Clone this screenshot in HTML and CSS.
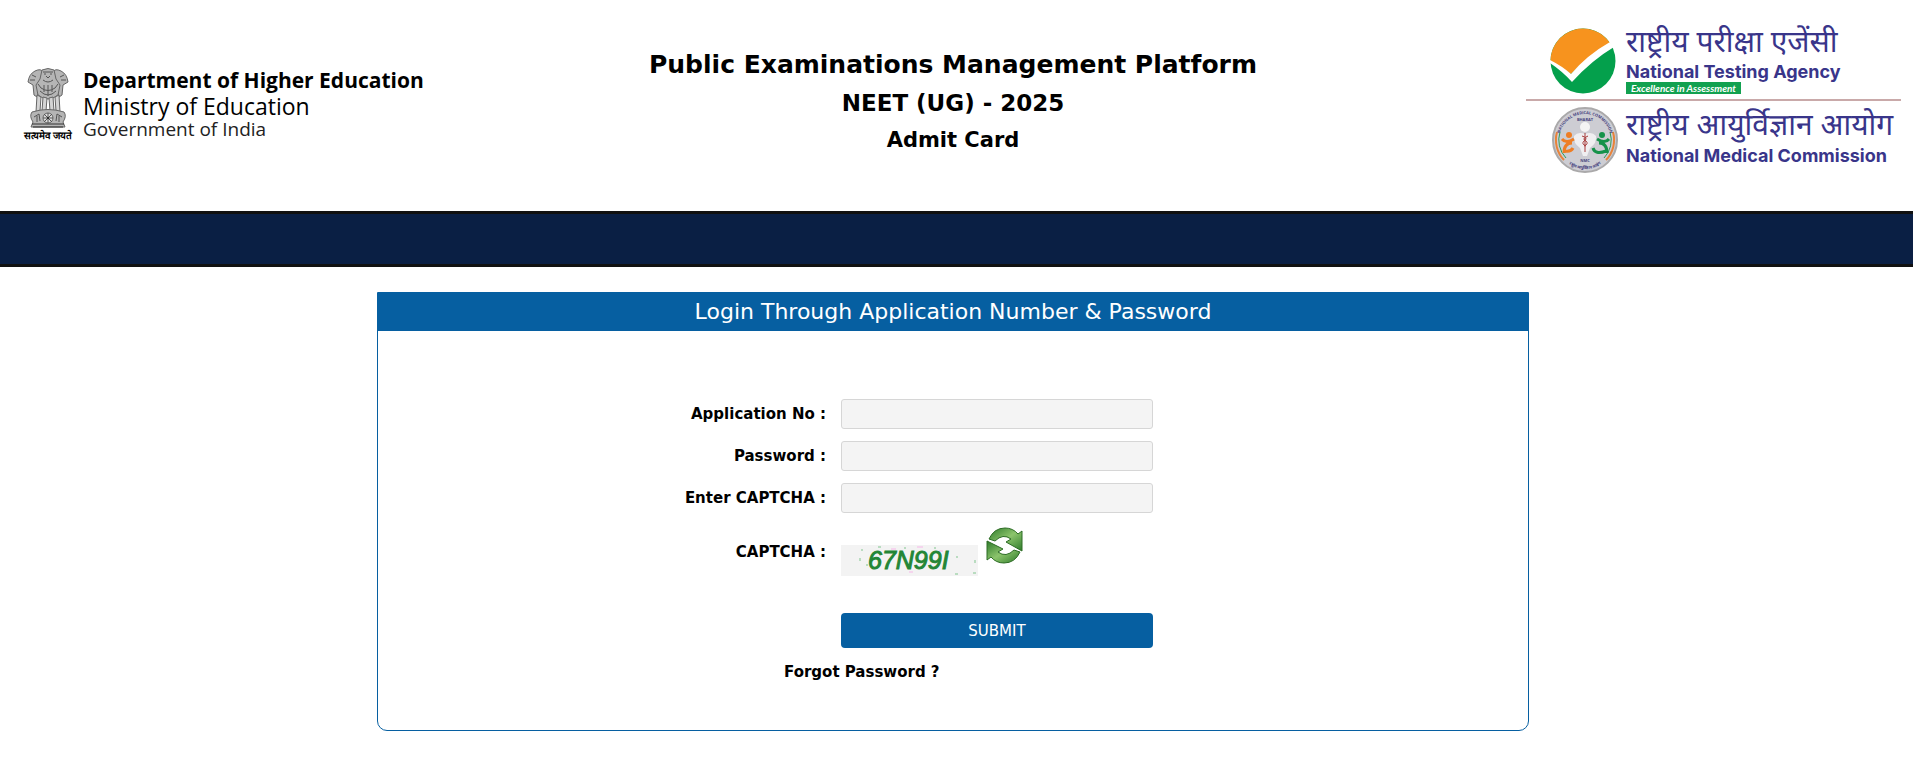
FILE: index.html
```
<!DOCTYPE html>
<html lang="en">
<head>
  <meta charset="UTF-8">
  <meta name="viewport" content="width=device-width, initial-scale=1.0">
  <title>NEET (UG) - 2025 Admit Card</title>
  <link rel="stylesheet" href="styles.css">
</head>
<body>
  <header class="header">
    <div class="dept">
      <div class="emblem">
        <svg width="42" height="60" viewBox="0 0 42 60" aria-hidden="true">
          <g fill="#b5b5b5" stroke="#666" stroke-width="1">
            <path d="M8 3 Q14 0 16 4 L15 12 L10 29 L7 27 L6 17 L1 14 Q2 6 8 3Z"/>
            <path d="M34 3 Q28 0 26 4 L27 12 L32 29 L35 27 L36 17 L41 14 Q40 6 34 3Z"/>
            <path d="M15 2 Q21 -1 27 2 L29 11 L33 17 L31 27 Q26 31 21 31 Q16 31 11 27 L9 17 L13 11Z"/>
            <path d="M10 27 L14 29 L13 43 L9 44Z M16 29 L20 30 L19 43 L15 43Z M22 30 L26 29 L27 43 L23 43Z M28 29 L32 27 L33 44 L29 43Z" fill="#d4d4d4"/>
            <path d="M5 44 Q21 39 37 44 Q40 48 36 54 L38 59 L4 59 L6 54 Q2 48 5 44Z"/>
            <circle cx="21" cy="50" r="5" fill="#ddd"/>
          </g>
          <g fill="none" stroke="#555" stroke-width="1">
            <path d="M16 4 H26 M17 6 H19 M23 6 H25 M19 8 L21 10 L23 8 M16 12 Q21 16 26 12"/>
            <path d="M5 7 L9 9 M3 12 L8 12 M37 7 L33 9 M39 12 L34 12"/>
            <path d="M11 16 L14 20 M17 17 L17 24 M21 17 V28 M25 17 V24 M31 16 L28 20 M13 23 Q21 31 29 23 M14 20 Q21 25 28 20"/>
            <path d="M16 50 H26 M21 45 V55 M17 46 L25 54 M25 46 L17 54"/>
            <path d="M7 49 L12 46 L13 53 M10 48 V54 M35 49 L30 46 L29 53 M32 48 V54"/>
          </g>
          <path d="M5 56 H37 M6 59 H36" stroke="#333" stroke-width="1" fill="none"/>
          <circle cx="21" cy="50" r="1" fill="#222"/>
        </svg>
        <span class="motto" lang="hi">सत्यमेव जयते</span>
      </div>
      <div class="dept-text">
        <div class="dept-name">Department of Higher Education</div>
        <div class="ministry">Ministry of Education</div>
        <div class="government">Government of India</div>
      </div>
    </div>

    <div class="titles">
      <h1>Public Examinations Management Platform</h1>
      <h2>NEET (UG) - 2025</h2>
      <h3>Admit Card</h3>
    </div>

    <div class="agencies">
      <div class="agency nta">
        <svg width="66" height="66" viewBox="0 0 66 66" aria-hidden="true">
          <circle cx="33" cy="33" r="32.5" fill="#04a04c"/>
          <path d="M.5 33 A32.5 32.5 0 0 1 60 15 Q38 28 21 46Z" fill="#f7931e"/>
          <path d="M0 32 Q12 38 21 46 Q37 27 60 14 L64 19 Q42 32 22 54 Q12 43 0 35Z" fill="#fff"/>
        </svg>
        <div>
          <div class="agency-hindi" lang="hi">राष्ट्रीय परीक्षा एजेंसी</div>
          <div class="agency-name">National Testing Agency</div>
          <div class="tagline">Excellence in Assessment</div>
        </div>
      </div>
      <div class="agency nmc">
        <svg width="66" height="68" viewBox="0 0 66 68" aria-hidden="true">
          <defs>
            <path id="ring-top" d="M7 34 A26 26 0 0 1 59 34"/>
            <path id="ring-bottom" d="M4 34 A29 29 0 0 0 62 34"/>
          </defs>
          <circle cx="33" cy="34" r="32" fill="#cdcdd3" stroke="#aaa9aa" stroke-width="2"/>
          <path d="M5 26 A29 29 0 0 0 12 54" fill="none" stroke="#e8833a" stroke-width="2"/>
          <path d="M61 26 A29 29 0 0 1 54 54" fill="none" stroke="#e8833a" stroke-width="2"/>
          <path d="M8 26 A26 26 0 0 0 14 52 M58 26 A26 26 0 0 1 52 52" fill="none" stroke="#2d9b55" stroke-width="1"/>
          <text class="seal-text"><textPath href="#ring-top" startOffset="50%">NATIONAL MEDICAL COMMISSION</textPath></text>
          <text class="seal-text" lang="hi"><textPath href="#ring-bottom" startOffset="50%">राष्ट्रीय आयुर्विज्ञान आयोग</textPath></text>
          <text class="seal-text" x="33" y="15">BHARAT</text>
          <text class="seal-text" x="33" y="56">NMC</text>
          <circle cx="33" cy="21" r="5" fill="#f4f4f4"/>
          <path d="M22 30 Q26 25 33 28 Q40 25 44 30 Q45 37 38 42 L35 50 H31 L28 42 Q21 37 22 30Z" fill="#f0eff1"/>
          <path d="M33 27 V46 M30 30 Q37 32 32 35 Q29 38 34 40 M36 30 Q29 33 34 35 Q37 38 32 40" fill="none" stroke="#a83d3d" stroke-width="1"/>
          <circle cx="17" cy="29" r="3" fill="#ee7d24"/>
          <path d="M10 33 Q14 38 22 33 M20 37 Q12 37 12 47 M13 45 Q19 46 21 42" fill="none" stroke="#ee7d24" stroke-width="3"/>
          <circle cx="50" cy="29" r="3" fill="#16924a"/>
          <path d="M57 33 Q53 38 45 33 M47 37 Q55 37 55 47 M54 45 Q43 49 41 42" fill="none" stroke="#16924a" stroke-width="3"/>
        </svg>
        <div>
          <div class="agency-hindi" lang="hi">राष्ट्रीय आयुर्विज्ञान आयोग</div>
          <div class="agency-name">National Medical Commission</div>
        </div>
      </div>
    </div>
  </header>

  <nav class="navbar"></nav>

  <main class="main">
    <form class="login">
      <h2 class="login-title">Login Through Application Number &amp; Password</h2>
      <div class="fields">
        <label for="appNo">Application No :</label>
        <input type="text" id="appNo">

        <label for="password">Password :</label>
        <input type="password" id="password">

        <label for="captcha">Enter CAPTCHA :</label>
        <input type="text" id="captcha">
      </div>

      <div class="captcha-row">
        <span class="captcha-label">CAPTCHA :</span>
        <div class="captcha-box">
          <svg class="captcha-image" width="137" height="31" viewBox="0 0 137 31" role="img" aria-label="67N99I">
            <rect width="137" height="31" fill="#f3f3f3"/>
            <g fill="#b9dcc0">
              <rect x="20" y="4" width="2" height="2"/><rect x="18" y="13" width="2" height="3"/>
              <rect x="25" y="19" width="2" height="2"/><rect x="37" y="1" width="3" height="2"/>
              <rect x="63" y="2" width="2" height="2"/><rect x="93" y="2" width="2" height="2"/>
              <rect x="115" y="11" width="2" height="2"/><rect x="114" y="28" width="3" height="2"/>
              <rect x="132" y="27" width="3" height="2"/><rect x="133" y="15" width="2" height="3"/>
            </g>
            <g fill="#f5d5ee">
              <rect x="50" y="3" width="5" height="2"/><rect x="76" y="1" width="6" height="2"/>
              <rect x="98" y="5" width="4" height="2"/><rect x="68" y="26" width="4" height="2"/>
            </g>
            <text class="captcha-text" x="27" y="24">67N99I</text>
          </svg>
          <button type="button" class="refresh" aria-label="Refresh CAPTCHA">
            <svg width="37" height="37" viewBox="0 0 37 37" aria-hidden="true">
              <defs>
                <linearGradient id="green" x1="0" y1="0" x2="1" y2="1">
                  <stop offset="0" stop-color="#2d7a2a"/>
                  <stop offset=".5" stop-color="#8cc46c"/>
                  <stop offset="1" stop-color="#2d7a2a"/>
                </linearGradient>
              </defs>
              <g fill="url(#green)" stroke="#2c6c24" stroke-width="1">
                <path d="M3 12 Q8 1 19 1 Q27 1 32 7 L36 4 V24 L20 15 L25 12 Q17 6 9 14Z"/>
                <path d="M34 25 Q29 36 18 36 Q10 36 5 30 L1 33 V14 L17 22 L12 25 Q20 31 28 23Z"/>
              </g>
            </svg>
          </button>
        </div>
      </div>

      <button type="submit" class="submit">SUBMIT</button>
      <a href="#" class="forgot">Forgot Password ?</a>
    </form>
  </main>
</body>
</html>
```
FILE: styles.css
```
* {
  box-sizing: border-box;
}

body {
  margin: 0;
  font-family: Verdana, "DejaVu Sans", sans-serif;
  font-size: 15px;
  color: #000;
  background: #fff;
}

h1,
h2,
h3 {
  margin: 0;
}

svg {
  display: block;
  flex: none;
}

.header {
  display: grid;
  grid-template-columns: 1fr auto 1fr;
  min-height: 211px;
  padding: 28px 12px 0 5px;
}

.dept {
  display: flex;
  align-items: flex-start;
  gap: 12px;
  padding: 40px 0 0 20px;
  font-family: "Open Sans", sans-serif;
}

.emblem {
  display: flex;
  flex-direction: column;
  align-items: center;
  width: 46px;
}

.motto {
  font-size: 10px;
  font-weight: bold;
  line-height: 14px;
  white-space: nowrap;
}

.dept-name {
  font-size: 21px;
  font-weight: bold;
  line-height: 25px;
}

.ministry {
  font-size: 23px;
  line-height: 26px;
}

.government {
  font-size: 19px;
  line-height: 20px;
  color: #222;
}

.titles {
  padding-top: 18px;
  text-align: center;
}

.titles h1 {
  font-size: 25px;
  line-height: 38px;
}

.titles h2 {
  font-size: 23px;
  line-height: 38px;
}

.titles h3 {
  font-size: 21px;
  line-height: 36px;
}

.agencies {
  justify-self: end;
  width: 375px;
  color: #39358a;
}

.agency {
  display: flex;
  gap: 10px;
  padding-left: 24px;
}

.nta {
  height: 73px;
  border-bottom: 2px solid #c9a9a9;
}

.nmc {
  gap: 8px;
  padding: 5px 0 0 26px;
}

.agency-hindi {
  font-family: "Noto Sans Devanagari", "Noto Sans", sans-serif;
  font-size: 30px;
  line-height: 34px;
  white-space: nowrap;
}

.agency-name {
  font-family: Inter, sans-serif;
  font-size: 18px;
  font-weight: bold;
  line-height: 20px;
  white-space: nowrap;
}

.nmc .agency-hindi {
  padding-top: 4px;
  line-height: 36px;
}

.tagline {
  width: 115px;
  background: #12a150;
  color: #fff;
  font-family: Lato, sans-serif;
  font-size: 10px;
  font-style: italic;
  font-weight: bold;
  line-height: 12px;
  text-align: center;
  white-space: nowrap;
}

.seal-text {
  font-family: "Open Sans", sans-serif;
  font-size: 4px;
  font-weight: bold;
  fill: #45427e;
  text-anchor: middle;
}

.navbar {
  height: 56px;
  background: #0a1f44;
  border-top: 3px solid #111;
  border-bottom: 3px solid #111;
}

.main {
  padding: 25px 7px 50px 0;
}

.login {
  max-width: 1152px;
  margin: 0 auto;
  padding-bottom: 48px;
  border: 1px solid #065fa1;
  border-radius: 0 0 10px 10px;
}

.login-title {
  background: #065fa1;
  color: #fff;
  font-size: 22px;
  font-weight: normal;
  line-height: 38px;
  text-align: center;
}

.fields,
.captcha-row {
  display: grid;
  grid-template-columns: 448px 312px;
  column-gap: 15px;
  align-items: center;
}

.fields {
  row-gap: 12px;
  padding-top: 68px;
}

.fields label,
.captcha-label {
  font-weight: bold;
  text-align: right;
}

.fields input {
  height: 30px;
  padding: 4px 8px;
  background: #f4f4f4;
  border: 1px solid #d6d6d6;
  border-radius: 3px;
  font: inherit;
}

.captcha-row {
  padding-top: 14px;
}

.captcha-box {
  display: flex;
  align-items: flex-end;
  gap: 8px;
}

.captcha-image {
  margin-top: 18px;
}

.captcha-text {
  font-family: "Liberation Sans", Arial, sans-serif;
  font-size: 25px;
  font-style: italic;
  fill: #238636;
  stroke: #238636;
}

.refresh {
  align-self: flex-start;
  padding: 0;
  border: 0;
  background: none;
  cursor: pointer;
}

.submit {
  display: block;
  width: 312px;
  height: 35px;
  margin: 37px 0 0 463px;
  border: 0;
  border-radius: 4px;
  background: #065fa1;
  color: #fff;
  font-family: inherit;
  font-size: 15px;
  cursor: pointer;
}

.forgot {
  display: block;
  width: fit-content;
  margin: 14px 0 0 406px;
  color: #000;
  font-weight: bold;
  line-height: 20px;
  text-decoration: none;
}

@media (max-width: 1160px) {
  .header {
    grid-template-columns: 1fr;
    justify-items: center;
    gap: 16px;
    padding-bottom: 20px;
  }

  .agencies {
    justify-self: center;
  }

  .fields,
  .captcha-row {
    grid-template-columns: 1fr 2fr;
  }

  .submit,
  .forgot {
    margin-left: auto;
    margin-right: auto;
  }
}
```
